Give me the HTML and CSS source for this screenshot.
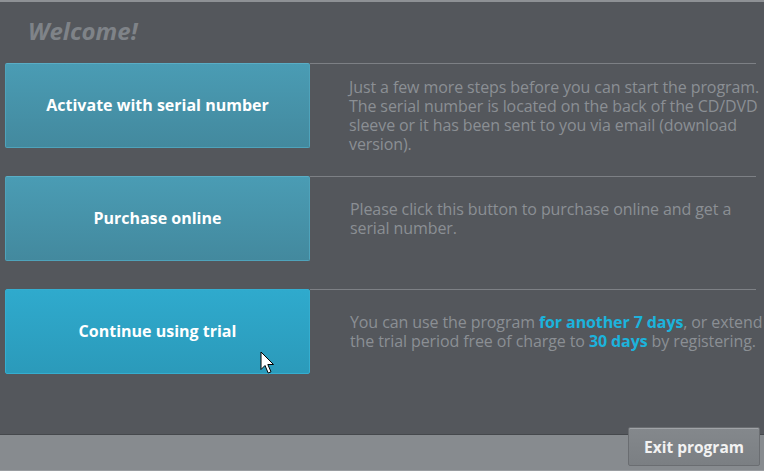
FILE: index.html
```html
<!DOCTYPE html>
<html lang="en">
  <head>
    <meta charset="UTF-8" />
    <title>Welcome</title>
    <link rel="stylesheet" href="styles.css">
  </head>
  <body>
    <div class="window">
      <!-- 标题 -->
      <h1 class="title">Welcome!</h1>

      <!-- 选项列表 -->
      <div class="options">
        <div class="row">
          <a class="btn" href="javascript:;">Activate with serial number</a>
          <div class="info info-top">
            <p>Just a few more steps before you can start the program. The serial number is located on the back of the CD/DVD sleeve or it has been sent to you via email (download version).</p>
          </div>
        </div>
        <div class="row">
          <a class="btn" href="javascript:;">Purchase online</a>
          <div class="info">
            <p>Please click this button to purchase online and get a serial number.</p>
          </div>
        </div>
        <div class="row">
          <a class="btn btn-hover" href="javascript:;">Continue using trial
            <svg class="cursor" width="15" height="24" viewBox="0 0 15 24">
              <path d="M1 1 L1 18.5 L5 14.5 L8.2 22 L11 20.8 L7.8 13.5 L13.5 13.5 Z" fill="#fff" stroke="#000" stroke-width="1"/>
            </svg>
          </a>
          <div class="info">
            <p>You can use the program <b>for another 7 days</b>, or extend the trial period free of charge to <b>30 days</b> by registering.</p>
          </div>
        </div>
      </div>

      <!-- 底部栏 -->
      <div class="footer">
        <a class="exit" href="javascript:;">Exit program</a>
      </div>
    </div>
  </body>
</html>
```
FILE: styles.css
```css
* {
  margin: 0;
  padding: 0;
  box-sizing: border-box;
}

body {
  background-color: #54575c;
  font-family: "Open Sans", "Noto Sans", sans-serif;
}

.window {
  width: 764px;
  height: 471px;
  overflow: hidden;
  border-top: 2px solid #8e9195;
  display: flex;
  flex-direction: column;
}

/* 标题 */
.title {
  height: 61px;
  padding: 15px 0 0 28px;
  font-size: 24px;
  font-style: italic;
  font-weight: 700;
  color: #7f8388;
  line-height: 28px;
}

.options {
  display: flex;
  flex-direction: column;
  gap: 28px;
  flex: 1;
}

.row {
  display: flex;
  height: 85px;
}

/* 按钮 */
.btn {
  position: relative;
  flex: none;
  width: 305px;
  margin-left: 5px;
  display: flex;
  align-items: center;
  justify-content: center;
  padding-bottom: 2px;
  color: #fff;
  font-size: 16px;
  font-weight: 700;
  text-decoration: none;
  background: linear-gradient(#4a9cb4, #43899e);
  border: 1px solid #4fa3bb;
  border-top-color: #5aaec6;
  border-radius: 2px;
}

.btn-hover {
  background: linear-gradient(#2faacd, #2b9aba);
  border-color: #35aed0;
}

/* 鼠标指针 */
.cursor {
  position: absolute;
  left: 254px;
  top: 61px;
}

/* 右侧说明文字 垂直居中 */
.info {
  flex: 1;
  min-width: 0;
  margin-right: 8px;
  border-top: 1px solid #7d8085;
  padding-left: 40px;
  display: flex;
  align-items: center;
}

/* 四行文字放不下 从顶部开始 */
.info-top {
  align-items: flex-start;
  padding: 14px 0 0 39px;
}

.info p {
  flex: none;
  width: 420px;
  font-size: 16px;
  line-height: 19px;
  letter-spacing: -0.1px;
  color: #8b8f94;
}

.info b {
  color: #1cb3dc;
}

/* 底部栏 */
.footer {
  height: 37px;
  background-color: #878b8f;
  border-top: 1px solid #45484c;
  border-bottom: 1px solid #9a9da1;
  display: flex;
  justify-content: flex-end;
  align-items: flex-start;
  padding-right: 4px;
}

.exit {
  margin-top: -8px;
  width: 132px;
  height: 39px;
  display: flex;
  align-items: center;
  justify-content: center;
  color: #f2f2f2;
  font-size: 15.5px;
  font-weight: 700;
  text-decoration: none;
  background: linear-gradient(#84888c, #7b7f83);
  border: 1px solid #6a6d71;
  box-shadow: inset 0 1px 0 #a0a3a7;
  border-radius: 2px;
}
```
